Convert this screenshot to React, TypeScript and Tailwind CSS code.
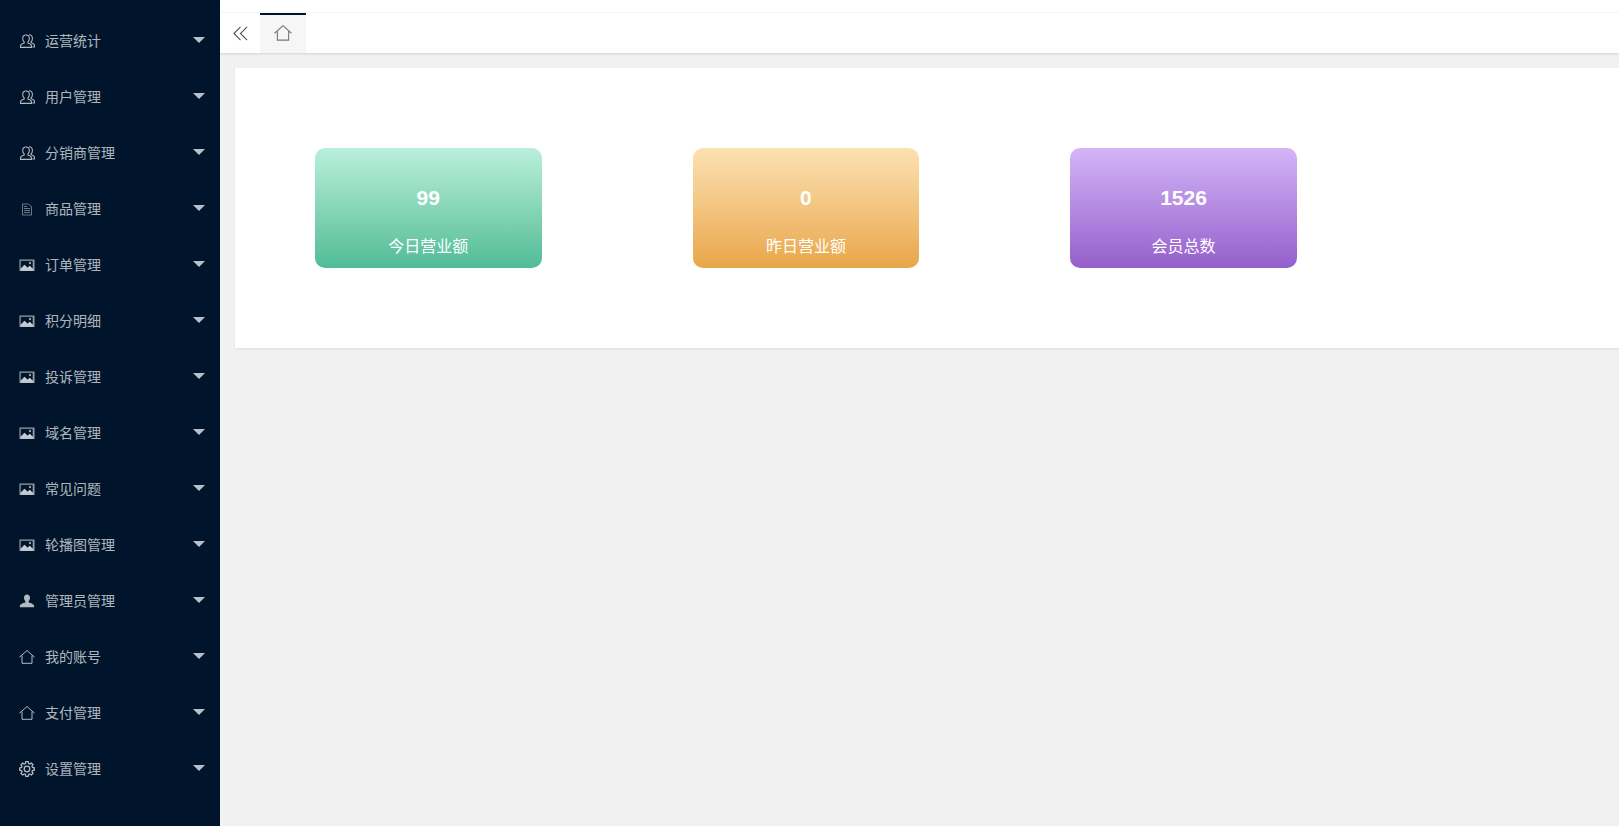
import React from 'react';

function FriendIcon() {
  return (
    <svg viewBox="1 1 14 14" className="w-[15px] h-[15px] ml-[0.5px]" fill="none" stroke="currentColor" strokeWidth="1">
      <path d="M6.500 2c-1.900 0-3 1.400-3 3.200 0 1.300.5 2.500 1.400 3.200v1.100c-1.700.5-3.400 1.300-3.400 2.700v1.300h10.200v-1.300c0-1.400-1.700-2.200-3.300-2.700V8.400c.9-.7 1.300-1.900 1.300-3.200C9.700 3.400 8.400 2 6.500 2z" />
      <path d="M9.500 1.700c2 .1 3.100 1.500 3.100 3.400 0 1.200-.4 2.300-1.200 3v1.100c1.500.5 3.100 1.200 3.100 2.600v1.300h-2" />
    </svg>
  );
}

function DocIcon() {
  return (
    <svg viewBox="0 0 16 16" className="w-4 h-4" fill="none" stroke="currentColor" strokeWidth="1">
      <path d="M3.500 3h6l3 2.500V14h-9z" opacity="0.6" />
      <path d="M5 7.500h6M5 9.500h6M5 11.500h6M5 5.500h3" opacity="0.6" />
    </svg>
  );
}

function PictureIcon() {
  return (
    <svg viewBox="0 0 16 16" className="w-4 h-4 opacity-85">
      <path fill="currentColor" d="M.500 2.500h15v11.500H.500zM1.700 3.700v8l3.800-4 3 3 2.200-2 3 3V3.700z" fillRule="evenodd" />
      <circle cx="11" cy="6" r="1.200" fill="currentColor" />
      <path fill="currentColor" d="M1.700 11.700l3.800-4 3 3 2.200-2 3.600 3.500v1.500H1.700z" />
    </svg>
  );
}

function UserIcon() {
  return (
    <svg viewBox="0 0 16 16" className="w-4 h-4" fill="currentColor">
      <path d="M8 1.500c-1.900 0-3 1.400-3 3.300 0 1.300.5 2.500 1.300 3.200v1.600C4.300 10.300.900 11 .900 13v1.200h14.200V13c0-2-3.400-2.700-5.400-3.400V8c.8-.7 1.300-1.900 1.300-3.200 0-1.900-1.100-3.300-3-3.300z" />
    </svg>
  );
}

function HomeIcon({ className }: { className: string }) {
  return (
    <svg viewBox="0 0 16 16" className={className} fill="none" stroke="currentColor" strokeWidth="1">
      <path d="M.500 8.200L8 1.500l7.500 6.700" />
      <path d="M3 6.500v7.800h10V6.500" />
    </svg>
  );
}

function GearIcon() {
  return (
    <svg viewBox="0 0 16 16" className="w-4 h-4" fill="none" stroke="currentColor" strokeWidth="1.300">
      <path d="M6.800 1.200h2.400l.4 1.800 1.200.5 1.500-1 1.700 1.700-1 1.500.5 1.200 1.800.4v2.400l-1.800.4-.5 1.200 1 1.500-1.700 1.700-1.500-1-1.200.5-.4 1.800H6.800l-.4-1.800-1.200-.5-1.500 1-1.700-1.700 1-1.500-.5-1.200-1.800-.4V7.400l1.800-.4.500-1.200-1-1.500 1.700-1.700 1.500 1 1.200-.5z" transform="translate(0 -.5)" />
      <circle cx="8" cy="8" r="2.800" />
    </svg>
  );
}

const menu: { label: string; icon: React.ReactNode }[] = [
  { label: '运营统计', icon: <FriendIcon /> },
  { label: '用户管理', icon: <FriendIcon /> },
  { label: '分销商管理', icon: <FriendIcon /> },
  { label: '商品管理', icon: <DocIcon /> },
  { label: '订单管理', icon: <PictureIcon /> },
  { label: '积分明细', icon: <PictureIcon /> },
  { label: '投诉管理', icon: <PictureIcon /> },
  { label: '域名管理', icon: <PictureIcon /> },
  { label: '常见问题', icon: <PictureIcon /> },
  { label: '轮播图管理', icon: <PictureIcon /> },
  { label: '管理员管理', icon: <UserIcon /> },
  { label: '我的账号', icon: <HomeIcon className="w-4 h-4" /> },
  { label: '支付管理', icon: <HomeIcon className="w-4 h-4" /> },
  { label: '设置管理', icon: <GearIcon /> },
];

const stats = [
  { value: '99', label: '今日营业额', bg: 'from-[#b9efdc] to-[#4fbc97]' },
  { value: '0', label: '昨日营业额', bg: 'from-[#fbe2b2] to-[#e9a646]' },
  { value: '1526', label: '会员总数', bg: 'from-[#d5b5f8] to-[#955fcb]' },
];

export default function App() {
  return (
    <div className="flex h-[826px] overflow-hidden bg-[#f1f1f1] font-['Liberation_Sans','Noto_Sans_CJK_SC',sans-serif]">
      {/* 侧边栏 */}
      <aside className="w-[220px] shrink-0 bg-[#00152b] pt-[13px]">
        {menu.map((item) => (
          <div key={item.label} className="h-14 flex items-center pl-[19px] pr-[15px] text-sm text-white/70">
            <span className="w-[26px] shrink-0">{item.icon}</span>
            <span className="flex-1">{item.label}</span>
            <span className="mb-[2px] border-x-[6px] border-t-[6px] border-x-transparent border-t-[#b8c0ca]" />
          </div>
        ))}
      </aside>

      <main className="flex-1 min-w-0">
        <header className="bg-white h-[53px] shadow-[0_1px_2px_rgba(0,0,0,0.12)]">
          <div className="h-[13px] border-b border-[#f5f5f5]" />
          <div className="flex h-[40px]">
            <div className="w-10 flex items-center justify-center text-[#555]">
              <svg viewBox="0 0 16 16" className="w-[15px] h-[15px]" fill="none" stroke="currentColor" strokeWidth="1.200">
                <path d="M8 1L1 8l7 7M15 1L8 8l7 7" />
              </svg>
            </div>
            <div className="w-[46px] bg-[#f6f6f6] border-t-2 border-[#00152b] flex items-center justify-center text-[#777] pb-[3px]">
              <HomeIcon className="w-[18px] h-[18px]" />
            </div>
          </div>
        </header>

        <div className="pl-[15px] pt-[15px]">
          <section className="w-[1500px] bg-white p-20 flex gap-[151px] shadow-[0_1px_2px_rgba(0,0,0,0.08)]">
            {stats.map((s) => (
              <div key={s.label} className={`w-[226.6px] h-[120px] rounded-[10px] bg-gradient-to-b ${s.bg} text-white flex flex-col items-center pt-[36px]`}>
                <div className="text-[21px] font-bold leading-7">{s.value}</div>
                <div className="text-base leading-6 mt-[23px]">{s.label}</div>
              </div>
            ))}
          </section>
        </div>
      </main>
    </div>
  );
}
